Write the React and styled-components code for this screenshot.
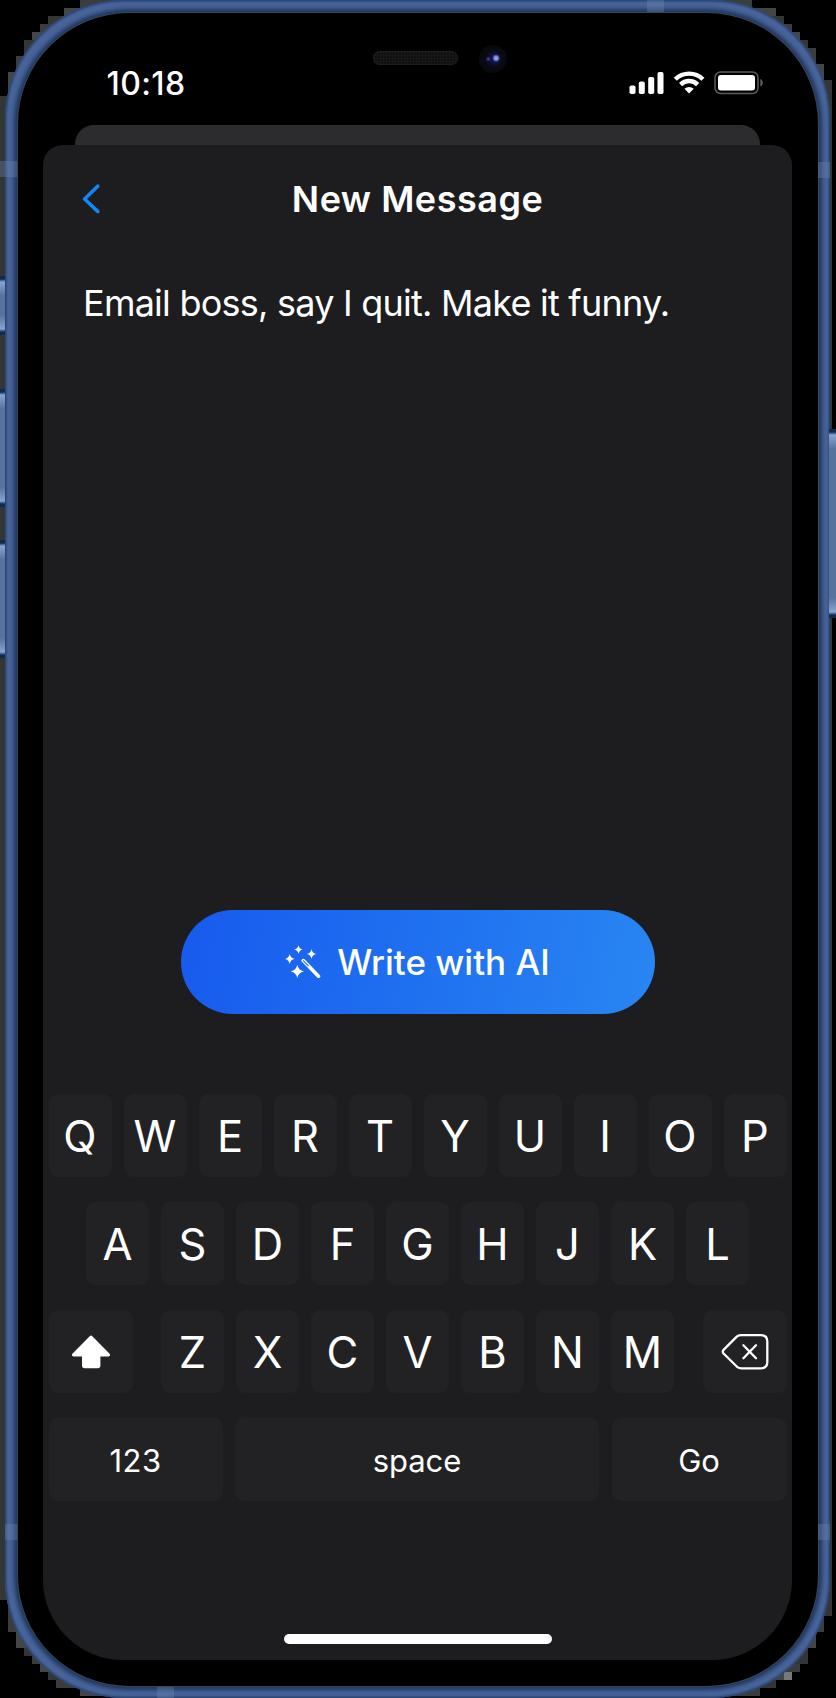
import React from "react";
import styled, { createGlobalStyle } from "styled-components";

const Global = createGlobalStyle`
  * { box-sizing: border-box; }
  html, body { margin: 0; padding: 0; background: #000; }
  body { font-family: Inter, "Liberation Sans", sans-serif; color: #fff; }
  button { font: inherit; color: inherit; border: 0; padding: 0; }
`;

const Stage = styled.main`
  position: relative;
  width: 836px;
  height: 1698px;
  overflow: hidden;
  background: #000;
  padding: 0 6px 0 5px;
`;

const FringeLayer = styled.svg`
  position: absolute;
  left: 0;
  top: 0;
`;

const Frame = styled.div`
  position: relative;
  height: 1698px;
  border-radius: 119px;
  padding: 12.5px 12px 12.5px 12.5px;
  background: #48649a;
  box-shadow: inset 0 0 2px 1.5px #26426f;
`;

const Bezel = styled.div`
  height: 1673px;
  border-radius: 111px;
  background: #000;
  box-shadow: 0 0 0 1px #3c4653, 0 0 4px 4px #1d355c;
  padding: 0 26px 25.5px 25.5px;
  display: flex;
  flex-direction: column;
`;

const StatusBar = styled.header`
  height: 112.5px;
  padding: 58px 27px 0 63.5px;
  display: flex;
  align-items: flex-start;
  justify-content: space-between;
`;

const Time = styled.span`
  font-size: 32px;
  line-height: 26px;
  font-weight: 500;
  letter-spacing: 0.4px;
`;

const BackCard = styled.div`
  height: 20px;
  margin: 0 32px;
  background: #2c2c2e;
  border-radius: 19px 19px 0 0;
`;

const Sheet = styled.section`
  flex: 1;
  background: #1d1d1f;
  border-radius: 20px 20px 80px 80px;
  display: flex;
  flex-direction: column;
  align-items: center;
`;

const NavBar = styled.div`
  width: 100%;
  height: 108px;
  display: grid;
  grid-template-columns: 80px 1fr 80px;
  align-items: center;
`;

const BackButton = styled.button`
  background: none;
  height: 40px;
  padding-left: 38px;
  display: flex;
  align-items: center;
`;

const Title = styled.h1`
  margin: 0;
  text-align: center;
  font-size: 36px;
  line-height: 44px;
  font-weight: 600;
  letter-spacing: 0.5px;
  white-space: nowrap;
`;

const Message = styled.p`
  margin: 0;
  width: 100%;
  height: 657px;
  padding: 28px 0 0 40px;
  font-size: 36px;
  line-height: 44px;
  letter-spacing: -0.76px;
  white-space: nowrap;
`;

const WriteButton = styled.button`
  width: 474px;
  height: 104px;
  border-radius: 52px;
  background: linear-gradient(100deg, #185cee 4%, #1f70f0 50%, #2986f2 100%);
  display: flex;
  align-items: center;
  justify-content: center;
  gap: 16px;
  font-size: 35px;
  font-weight: 500;
`;

const Keyboard = styled.div`
  width: 738px;
  margin-top: 80px;
  display: flex;
  flex-direction: column;
  gap: 25px;
`;

const KeyRow = styled.div`
  display: flex;
  justify-content: ${(p) => p.$justify || "center"};
  gap: 12px;
`;

const KeyGroup = styled.div`
  display: flex;
  gap: 12px;
`;

const Key = styled.button`
  width: ${(p) => p.$width || 63}px;
  height: 83px;
  border-radius: 9px;
  background: #222224;
  display: flex;
  align-items: center;
  justify-content: center;
  padding-top: ${(p) => (p.$icon ? 0 : 2)}px;
  font-size: ${(p) => (p.$label ? 31 : 43.5)}px;
  font-weight: 400;
  line-height: 1;
  letter-spacing: ${(p) => p.$tracking || 0}px;
`;

const HomeIndicator = styled.div`
  width: 268px;
  height: 10px;
  border-radius: 5px;
  background: #fff;
  margin-top: 133px;
`;

const Speaker = styled.div`
  position: absolute;
  left: 373px;
  top: 51px;
  width: 85px;
  height: 14px;
  border-radius: 7px;
  background: radial-gradient(circle, #1c1c1c 0.8px, #101010 1.2px) 0 0 / 3px 3px;
  box-shadow: inset 0 0 1px 1px #1e1e1e;
`;

const Camera = styled.div`
  position: absolute;
  left: 479px;
  top: 45px;
  width: 28px;
  height: 28px;
  border-radius: 50%;
  background: radial-gradient(circle at 61% 47%, #8f98ee 0 1.5px, transparent 4px),
    radial-gradient(circle at 33% 50%, #54388c 0 0.5px, transparent 2.5px),
    radial-gradient(circle at 54% 50%, #0b1448 0 4px, #090b14 8px, #08090e 13px);
`;

const SideKey = styled.div`
  position: absolute;
  left: ${(p) => p.$left}px;
  top: ${(p) => p.$top}px;
  width: 7px;
  height: ${(p) => p.$height}px;
  background: linear-gradient(#10294e 0 3px, #87a4d2 6px, #56739c 20px, #56739c calc(100% - 20px), #87a4d2 calc(100% - 6px), #10294e calc(100% - 3px));
`;

const Band = styled.div`
  position: absolute;
  left: ${(p) => p.$x}px;
  top: ${(p) => p.$y}px;
  width: ${(p) => p.$w}px;
  height: ${(p) => p.$h}px;
  background: rgba(110, 135, 175, 0.35);
`;

// Stepped halo behind the rounded frame: [top, bottom, outer x].
const LEFT_STEPS = [
  [0, 8, 80], [8, 16, 64], [16, 24, 48], [24, 32, 40], [32, 40, 32], [40, 56, 24],
  [56, 72, 16], [72, 96, 8], [96, 1600, 0], [1600, 1632, 8], [1632, 1648, 16],
  [1648, 1656, 24], [1656, 1664, 32], [1664, 1672, 40], [1672, 1680, 48],
  [1680, 1688, 56], [1688, 1696, 80],
];
const RIGHT_STEPS = [
  [0, 8, 752], [8, 16, 776], [16, 24, 784], [24, 32, 792], [32, 40, 800], [40, 48, 808],
  [48, 64, 816], [64, 80, 824], [80, 1616, 832], [1616, 1632, 824], [1632, 1648, 816],
  [1648, 1664, 808], [1664, 1672, 800], [1672, 1680, 792], [1680, 1688, 776],
  [1688, 1696, 760],
];
const SHADES = ["#3b3d3d", "#444645", "#343636"];

const Fringe = () => (
  <FringeLayer width="836" height="1698">
    {LEFT_STEPS.map(([top, bottom, x], i) => (
      <rect key={`l${top}`} x={x} y={top} width="50" height={bottom - top} fill={SHADES[i % 3]} />
    ))}
    {RIGHT_STEPS.map(([top, bottom, x], i) => (
      <rect key={`r${top}`} x={x - 50} y={top} width="50" height={bottom - top} fill={SHADES[i % 3]} />
    ))}
    <rect x="784" y="1672" width="8" height="8" fill="#777a7a" />
  </FringeLayer>
);

const StatusIcons = () => (
  <svg width="136" height="24" viewBox="0 0 136 24" fill="#fff">
    <rect x="0.5" y="14.5" width="6" height="8.5" rx="1.8" />
    <rect x="9.8" y="10.5" width="6" height="12.5" rx="1.8" />
    <rect x="19.2" y="6" width="6" height="17" rx="1.8" />
    <rect x="28.5" y="1" width="6" height="22" rx="1.8" />
    <g fill="none" stroke="#fff" strokeWidth="4.4">
      <path d="M46.3 8.3A19.5 19.5 0 0 1 73.9 8.3" />
      <path d="M51.6 13.6A12 12 0 0 1 68.6 13.6" />
    </g>
    <path d="M60.1 22.5L55.5 17.8A6.8 6.8 0 0 1 64.7 17.8Z" />
    <rect x="86" y="0.9" width="43" height="21.6" rx="5.5" fill="none" stroke="#5b5b5d" strokeWidth="1.5" />
    <rect x="89" y="4" width="37" height="15.5" rx="3" />
    <path d="M131.3 8V15.5C134.6 14.4 134.6 9.1 131.3 8Z" fill="#5b5b5d" />
  </svg>
);

const ChevronIcon = () => (
  <svg width="20" height="30" viewBox="0 0 20 30" fill="none" stroke="#1086f8" strokeWidth="3.6" strokeLinecap="round" strokeLinejoin="round">
    <path d="M16.7 2.2L3.6 15L16.7 27.4" />
  </svg>
);

const star = (cx, cy, r) =>
  `M${cx} ${cy - r}Q${cx + r * 0.16} ${cy - r * 0.16} ${cx + r} ${cy}Q${cx + r * 0.16} ${cy + r * 0.16} ${cx} ${cy + r}Q${cx - r * 0.16} ${cy + r * 0.16} ${cx - r} ${cy}Q${cx - r * 0.16} ${cy - r * 0.16} ${cx} ${cy - r}Z`;

const WandIcon = () => (
  <svg width="36" height="34" viewBox="0 0 36 34" fill="#fff">
    <path d={star(13.5, 4.5, 4.3)} />
    <path d={star(26.5, 9, 4.8)} />
    <path d={star(4.7, 14, 4.9)} />
    <path d={star(12.3, 26.4, 6.6)} />
    <path d="M18.3 15.6L33.5 31.2" stroke="#fff" strokeWidth="3.6" strokeLinecap="round" />
    <path d="M18.5 15.8L23.2 20.6" stroke="#1f6bf0" strokeWidth="1.2" strokeLinecap="round" />
  </svg>
);

const ShiftIcon = () => (
  <svg width="40" height="36" viewBox="0 0 40 36" fill="#fff">
    <path d="M18.7 2.2Q20 1 21.3 2.2L38.6 19.8Q40 22.2 37.4 22.4H29.4V31.5Q29.4 34.2 26.7 34.2H13.7Q11 34.2 11 31.5V22.4H2.6Q0 22.2 1.4 19.8Z" />
  </svg>
);

const DeleteIcon = () => (
  <svg width="48" height="38" viewBox="0 0 48 38" fill="none" stroke="#fff" strokeWidth="2.3" strokeLinecap="round" strokeLinejoin="round">
    <path d="M16 3.4Q17.8 2.2 20.5 2.2H40Q46.3 2.2 46.3 8.5V29Q46.3 35.3 40 35.3H20.5Q18 35.3 16 33.8L2.8 20.8Q0.8 18.8 2.8 16.6Z" />
    <path d="M22.4 12.3L35 25.2M35 12.3L22.4 25.2" />
  </svg>
);

const Keys = ({ letters }) => [...letters].map((c) => <Key key={c}>{c}</Key>);

export default function App() {
  return (
    <Stage>
      <Global />
      <Fringe />
      <SideKey $left={-1} $top={276} $height={59} />
      <SideKey $left={-1} $top={389} $height={118} />
      <SideKey $left={-1} $top={540} $height={118} />
      <Frame>
        <Bezel>
          <StatusBar>
            <Time>10:18</Time>
            <StatusIcons />
          </StatusBar>
          <BackCard />
          <Sheet>
            <NavBar>
              <BackButton aria-label="Back">
                <ChevronIcon />
              </BackButton>
              <Title>New Message</Title>
            </NavBar>
            <Message>Email boss, say I quit. Make it funny.</Message>
            <WriteButton>
              <WandIcon />
              <span>Write with AI</span>
            </WriteButton>
            <Keyboard>
              <KeyRow>
                <Keys letters="QWERTYUIOP" />
              </KeyRow>
              <KeyRow>
                <Keys letters="ASDFGHJKL" />
              </KeyRow>
              <KeyRow $justify="space-between">
                <Key $icon $width={84} aria-label="Shift">
                  <ShiftIcon />
                </Key>
                <KeyGroup>
                  <Keys letters="ZXCVBNM" />
                </KeyGroup>
                <Key $icon $width={84} aria-label="Delete">
                  <DeleteIcon />
                </Key>
              </KeyRow>
              <KeyRow $justify="space-between">
                <Key $label $width={174} $tracking={0.5}>123</Key>
                <Key $label $width={364} $tracking={-0.1}>space</Key>
                <Key $label $width={175} $tracking={-0.1}>Go</Key>
              </KeyRow>
            </Keyboard>
            <HomeIndicator />
          </Sheet>
        </Bezel>
      </Frame>
      <SideKey $left={829} $top={429} $height={189} />
      <Speaker />
      <Camera />
      <Band $x={647} $y={0} $w={17} $h={12} />
      <Band $x={157} $y={1687} $w={17} $h={11} />
      <Band $x={0} $y={161} $w={17} $h={16} />
      <Band $x={818} $y={162} $w={12} $h={16} />
      <Band $x={5} $y={1524} $w={12} $h={16} />
      <Band $x={818} $y={1524} $w={12} $h={16} />
    </Stage>
  );
}
